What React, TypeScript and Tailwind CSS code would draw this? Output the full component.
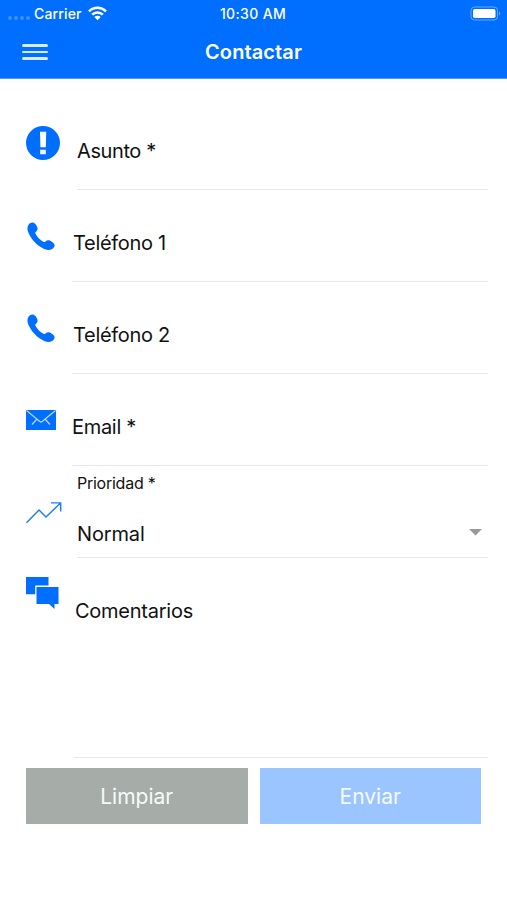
import React from "react"

const AlertIcon = () => (
    <svg width="34" height="34" viewBox="0 0 34 34">
        <circle cx="17" cy="17" r="17" fill="#006eff" />
        <path d="M14 5.800h6.200l-.4 15.400h-5.400zM14.200 23.800h5.600v4.500h-5.600z" fill="#fff" />
    </svg>
)

const PhoneIcon = () => (
    <svg width="28" height="28" viewBox="0 0 28 28" fill="#006eff">
        <path d="M1.500 2.800C3 .8 5.200 0 7 .9c1.600.9 3 2.900 3.400 4.700.4 2-.3 3.300-1.500 4.200-.7.600-.8 1.300-.3 2.200 1.800 3.200 4.500 6 7.800 7.800.8.400 1.500.3 2.100-.4 1.200-1.200 2.700-1.500 4.400-.8 1.700.7 3.400 2 4.300 3.400 1 1.700.1 3.600-2 4.900-2.300 1.400-5.200 1.300-8 0C10.100 23.700 4.200 17.500 1.300 10.500.1 7.600.1 4.800 1.500 2.800z" />
    </svg>
)

const MailIcon = () => (
    <svg width="30" height="20" viewBox="0 0 30 20" fill="none">
        <path d="M0 0h30v20H0z" fill="#006eff" />
        <path d="M.5.500l13.300 11q1.200 1 2.400 0L29.500.500M10.800 9.200L6 14.500M19.200 9.200L24 14.500" stroke="#b5d6ff" strokeWidth="1.300" />
    </svg>
)

const TrendIcon = () => (
    <svg width="36" height="23" viewBox="0 0 36 23" fill="none" stroke="#1a7bff" strokeWidth="1.400">
        <path d="M.5 20.800L13 8l7 7L34.500 1M25 .900h9.700V9.500" />
    </svg>
)

const ChatIcon = () => (
    <svg width="33" height="32" viewBox="0 0 33 32" fill="#006eff">
        <path d="M0 0h22.500v8.500H9.200v8.700H0z" />
        <path d="M10.500 10H32.500v17H28.500v5l-5.500-5H10.500z" />
    </svg>
)

interface FieldProps {
    label: string
    icon: React.ReactNode
    iconClass: string
    labelClass: string
}

function Field({ label, icon, iconClass, labelClass }: FieldProps) {
    return (
        <div className="flex h-[92px] pl-[26px] pr-[19px]">
            <div className={`shrink-0 ${iconClass}`}>{icon}</div>
            <div className="flex-1 border-b border-[#e7e7e7] pt-[39px]">
                <label className={`block text-xl leading-7 ${labelClass}`}>{label}</label>
            </div>
        </div>
    )
}

function Header() {
    return (
        <header className="h-[79px] border-b border-[#4d9bff] bg-[#006eff] text-white">
            <div className="grid h-[26px] grid-cols-[1fr_100px_1fr] items-center pl-2 pr-[6px] font-medium">
                <div className="flex items-center">
                    <div className="mt-[9px] flex w-[26px] gap-[2px]">
                        {[0, 1, 2, 3].map((dot) => (
                            <span key={dot} className="size-1 rounded-full bg-[#3d90ff]" />
                        ))}
                    </div>
                    <span className="w-12 text-[14px] tracking-[0.15px]">Carrier</span>
                    <svg className="ml-[6px]" width="19" height="15" viewBox="0 0 19 15" fill="none" stroke="#fff" strokeWidth="2.500">
                        <path d="M1 5.300C5.800.6 13.200.6 18 5.300M4.200 8.700c3-3 7.600-3 10.600 0" />
                        <path d="M9.500 14.200L6.300 11c1.800-1.600 4.600-1.600 6.400 0z" fill="#fff" stroke="none" />
                    </svg>
                </div>
                <span className="-ml-[3px] text-center text-[14px] tracking-[0.35px]">10:30 AM</span>
                <svg className="justify-self-end" width="31" height="15" viewBox="0 0 31 15">
                    <rect x="1" y="1" width="26.500" height="13" rx="3.500" fill="none" stroke="#66a9ff" />
                    <rect x="3" y="3" width="22.500" height="9" rx="1.800" fill="#fff" />
                    <path d="M29 5.500c1.700.7 1.700 3.300 0 4z" fill="#66a9ff" />
                </svg>
            </div>
            <div className="grid h-[52px] grid-cols-[60px_1fr_60px] items-center">
                <button className="ml-[22px] flex w-[26px] flex-col gap-1" aria-label="Menú">
                    <span className="h-[2.500px] rounded-full bg-[#d9eaff]" />
                    <span className="h-[2.500px] rounded-full bg-[#d9eaff]" />
                    <span className="h-[2.500px] rounded-full bg-[#d9eaff]" />
                </button>
                <h1 className="text-center text-xl font-semibold tracking-[0.1px]">Contactar</h1>
            </div>
        </header>
    )
}

export default function App() {
    return (
        <div className="h-[900px] w-[507px] overflow-hidden bg-white font-['Inter',sans-serif] text-[#111]">
            <Header />
            <form className="pt-[19px]">
                <Field label="Asunto *" icon={<AlertIcon />} iconClass="w-[51px] pt-7" labelClass="tracking-[-0.4px]" />
                <Field label="Teléfono 1" icon={<PhoneIcon />} iconClass="w-[46px] pl-px pt-8" labelClass="pl-px tracking-[-0.3px]" />
                <Field label="Teléfono 2" icon={<PhoneIcon />} iconClass="w-[46px] pl-px pt-8" labelClass="pl-px tracking-[-0.3px]" />
                <Field label="Email *" icon={<MailIcon />} iconClass="w-[46px] pt-9" labelClass="tracking-[-0.3px]" />

                <div className="flex h-[92px] pl-[26px] pr-[19px]">
                    <div className="w-[51px] shrink-0 pt-9"><TrendIcon /></div>
                    <div className="flex-1 border-b border-[#e7e7e7] pt-[7px]">
                        <label className="block text-base leading-5 tracking-[-0.25px]">Prioridad *</label>
                        <div className="mt-[27px] flex items-center justify-between pr-[6px]">
                            <span className="text-xl leading-7 tracking-[-0.15px]">Normal</span>
                            <svg className="mb-1" width="13" height="7" viewBox="0 0 13 7" fill="#999">
                                <path d="M0 0h13L6.500 6.500z" />
                            </svg>
                        </div>
                    </div>
                </div>

                <div className="flex h-[200px] pl-[26px] pr-[19px]">
                    <div className="w-12 shrink-0 pt-[19px]"><ChatIcon /></div>
                    <div className="flex-1 border-b border-[#e7e7e7] pt-[39px]">
                        <label className="block pl-px text-xl leading-7 tracking-[-0.25px]">Comentarios</label>
                    </div>
                </div>

                <div className="mt-[10px] flex gap-3 pl-[26px] pr-[26px] text-[21px] text-[#f7fafa]">
                    <button type="button" className="h-14 flex-1 bg-[#a6aca8] pt-px">Limpiar</button>
                    <button type="button" className="h-14 flex-1 bg-[#9bc5ff] pt-px">Enviar</button>
                </div>
            </form>
        </div>
    )
}
